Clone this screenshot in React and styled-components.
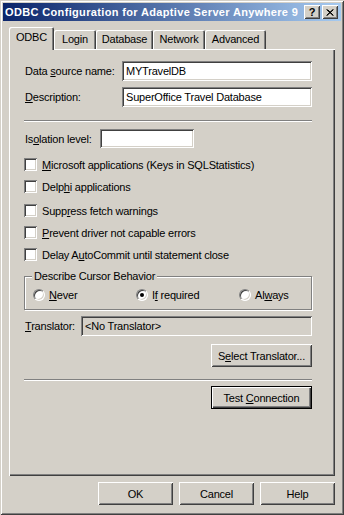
import React from "react";
import styled, { createGlobalStyle, css } from "styled-components";

const GlobalStyle = createGlobalStyle`
  html, body {
    margin: 0;
    padding: 0;
    background: #d4d0c8;
  }
  * {
    box-sizing: border-box;
  }
`;

const FACE = "#d4d0c8";
const SHADOW = "#808080";
const DARK = "#404040";

const raised = css`
  box-shadow: inset 1px 1px #fff, inset -1px -1px ${DARK}, inset 2px 2px ${FACE},
    inset -2px -2px ${SHADOW};
`;

const sunken = css`
  box-shadow: inset 1px 1px ${SHADOW}, inset -1px -1px #fff, inset 2px 2px ${DARK},
    inset -2px -2px ${FACE};
`;

const Window = styled.div`
  width: 344px;
  height: 515px;
  padding: 3px;
  background: ${FACE};
  display: flex;
  flex-direction: column;
  font-family: "Liberation Sans", Arial, sans-serif;
  font-size: 11px;
  letter-spacing: -0.2px;
  color: #000;
  box-shadow: inset 1px 1px ${FACE}, inset -1px -1px ${DARK}, inset 2px 2px #fff,
    inset -2px -2px ${SHADOW};
`;

const TitleBar = styled.div`
  height: 18px;
  display: flex;
  align-items: center;
  padding: 0 3px 0 2px;
  background: linear-gradient(to right, #0a246a, #a6caf0);
`;

const TitleText = styled.div`
  flex: 1;
  color: #fff;
  font-weight: bold;
  font-size: 11px;
  letter-spacing: 0.35px;
  white-space: nowrap;
`;

const CaptionButton = styled.div`
  width: 16px;
  height: 14px;
  background: ${FACE};
  ${raised};
  display: flex;
  align-items: center;
  justify-content: center;
  font-weight: bold;
  font-size: 11px;
  letter-spacing: 0;
  line-height: 1;
  margin-left: ${(p) => p.$ml || 0}px;
`;

const Content = styled.div`
  flex: 1;
  display: flex;
  flex-direction: column;
  padding: 6px 6px 7px 6px;
`;

const TabRow = styled.div`
  height: 22px;
  display: flex;
  align-items: flex-end;
  position: relative;
  z-index: 1;
`;

const Tab = styled.div`
  width: ${(p) => p.$w}px;
  height: ${(p) => (p.$active ? 23 : 19)}px;
  margin-bottom: ${(p) => (p.$active ? -1 : 0)}px;
  background: ${FACE};
  border-radius: 2px 2px 0 0;
  box-shadow: inset 1px 1px #fff, inset -1px 0 ${DARK}, inset -2px 0 ${SHADOW};
  display: flex;
  align-items: center;
  justify-content: center;
  padding-bottom: ${(p) => (p.$active ? 3 : 1)}px;
  white-space: nowrap;
`;

const Panel = styled.div`
  height: 427px;
  background: ${FACE};
  padding: 0 23px 0 16px;
  box-shadow: inset 1px 1px #fff, inset -1px -1px ${DARK}, inset -2px -2px ${SHADOW};
  display: flex;
  flex-direction: column;
`;

const FieldRow = styled.div`
  display: flex;
  align-items: center;
  margin-top: ${(p) => p.$mt}px;
`;

const Label = styled.div`
  width: ${(p) => p.$w}px;
  white-space: nowrap;
`;

const TextField = styled.div`
  width: ${(p) => p.$w}px;
  height: ${(p) => p.$h || 20}px;
  background: ${(p) => (p.$disabled ? FACE : "#fff")};
  ${sunken};
  display: flex;
  align-items: center;
  padding-left: 4px;
  white-space: nowrap;
`;

const Separator = styled.div`
  height: 2px;
  margin-top: ${(p) => p.$mt}px;
  margin-left: -1px;
  border-top: 1px solid ${SHADOW};
  border-bottom: 1px solid #fff;
`;

const CheckRow = styled.div`
  display: flex;
  align-items: center;
  height: 13px;
  margin-top: ${(p) => p.$mt}px;
  margin-left: -1px;
`;

const CheckBox = styled.div`
  width: 13px;
  height: 13px;
  background: #fff;
  ${sunken};
  margin-right: 5px;
  flex-shrink: 0;
`;

const GroupBox = styled.div`
  position: relative;
  margin-top: ${(p) => p.$mt}px;
  margin-left: -1px;
  height: 34px;
  border: 1px solid ${SHADOW};
  box-shadow: inset 1px 1px #fff, 1px 1px #fff;
  display: flex;
  align-items: center;
  padding: 3px 0 0 8px;
`;

const GroupTitle = styled.div`
  position: absolute;
  top: -7px;
  left: 7px;
  padding: 0 2px;
  background: ${FACE};
  white-space: nowrap;
`;

const RadioOption = styled.div`
  width: ${(p) => p.$w}px;
  display: flex;
  align-items: center;
`;

const Radio = styled.div`
  width: 12px;
  height: 12px;
  border-radius: 50%;
  background: #fff;
  border: 1px solid;
  border-color: ${SHADOW} #fff #fff ${SHADOW};
  box-shadow: inset 1px 1px ${DARK}, inset -1px -1px ${FACE};
  margin-right: 4px;
  display: flex;
  align-items: center;
  justify-content: center;
  flex-shrink: 0;
  &::after {
    content: "";
    display: ${(p) => (p.$checked ? "block" : "none")};
    width: 4px;
    height: 4px;
    border-radius: 50%;
    background: #000;
  }
`;

const ButtonRight = styled.div`
  display: flex;
  justify-content: flex-end;
  margin-top: ${(p) => p.$mt}px;
`;

const Button = styled.div`
  width: ${(p) => p.$w}px;
  height: 23px;
  background: ${FACE};
  display: flex;
  align-items: center;
  justify-content: center;
  white-space: nowrap;
  ${(p) =>
    p.$default
      ? css`
          border: 1px solid #000;
          box-shadow: inset 1px 1px #fff, inset -1px -1px ${DARK},
            inset -2px -2px ${SHADOW};
        `
      : raised}
`;

const BottomButtons = styled.div`
  display: flex;
  justify-content: flex-end;
  gap: 6px;
  margin-top: 6px;
`;

const U = styled.span`
  text-decoration: underline;
`;

const checks = [
  { mt: 10, label: <><U>M</U>icrosoft applications (Keys in SQLStatistics)</> },
  { mt: 9, label: <>Delp<U>h</U>i applications</> },
  { mt: 11, label: <>Supp<U>r</U>ess fetch warnings</> },
  { mt: 9, label: <><U>P</U>revent driver not capable errors</> },
  { mt: 9, label: <>Delay A<U>u</U>toCommit until statement close</> },
];

const tabs = [
  { name: "ODBC", w: 45, active: true },
  { name: "Login", w: 42 },
  { name: "Database", w: 57 },
  { name: "Network", w: 52 },
  { name: "Advanced", w: 61 },
];

export default function App() {
  return (
    <>
      <GlobalStyle />
      <Window>
        <TitleBar>
          <TitleText>ODBC Configuration for Adaptive Server Anywhere 9</TitleText>
          <CaptionButton>?</CaptionButton>
          <CaptionButton $ml={2}>
            <svg width="8" height="7" viewBox="0 0 8 7">
              <path d="M0.5 0.5 L7 6.5 M1.5 0.5 L7.5 6.5 M7 0.5 L0.5 6.5 M7.5 0.5 L1 6.5" stroke="#000" strokeWidth="1" />
            </svg>
          </CaptionButton>
        </TitleBar>
        <Content>
          <TabRow>
            {tabs.map((t) => (
              <Tab key={t.name} $w={t.w} $active={t.active}>
                {t.name}
              </Tab>
            ))}
          </TabRow>
          <Panel>
            <FieldRow $mt={12}>
              <Label $w={97}>
                Data <U>s</U>ource name:
              </Label>
              <TextField $w={190}>MYTravelDB</TextField>
            </FieldRow>
            <FieldRow $mt={6}>
              <Label $w={97}>
                <U>D</U>escription:
              </Label>
              <TextField $w={190}>SuperOffice Travel Database</TextField>
            </FieldRow>
            <Separator $mt={13} />
            <FieldRow $mt={7}>
              <Label $w={75}>
                Is<U>o</U>lation level:
              </Label>
              <TextField $w={94} $h={19} />
            </FieldRow>
            {checks.map((c, i) => (
              <CheckRow key={i} $mt={c.mt}>
                <CheckBox />
                <span>{c.label}</span>
              </CheckRow>
            ))}
            <GroupBox $mt={15}>
              <GroupTitle>Describe Cursor Behavior</GroupTitle>
              <RadioOption $w={103}>
                <Radio />
                <span>
                  <U>N</U>ever
                </span>
              </RadioOption>
              <RadioOption $w={103}>
                <Radio $checked />
                <span>
                  I<U>f</U> required
                </span>
              </RadioOption>
              <RadioOption $w={70}>
                <Radio />
                <span>
                  Al<U>w</U>ays
                </span>
              </RadioOption>
            </GroupBox>
            <FieldRow $mt={6}>
              <Label $w={56}>
                <U>T</U>ranslator:
              </Label>
              <TextField $w={231} $disabled>
                &lt;No Translator&gt;
              </TextField>
            </FieldRow>
            <ButtonRight $mt={8}>
              <Button $w={101}>
                <span>
                  S<U>e</U>lect Translator...
                </span>
              </Button>
            </ButtonRight>
            <Separator $mt={12} />
            <ButtonRight $mt={5}>
              <Button $w={101} $default>
                <span>
                  Test <U>C</U>onnection
                </span>
              </Button>
            </ButtonRight>
          </Panel>
          <BottomButtons>
            <Button $w={75}>OK</Button>
            <Button $w={75}>Cancel</Button>
            <Button $w={75}>Help</Button>
          </BottomButtons>
        </Content>
      </Window>
    </>
  );
}
